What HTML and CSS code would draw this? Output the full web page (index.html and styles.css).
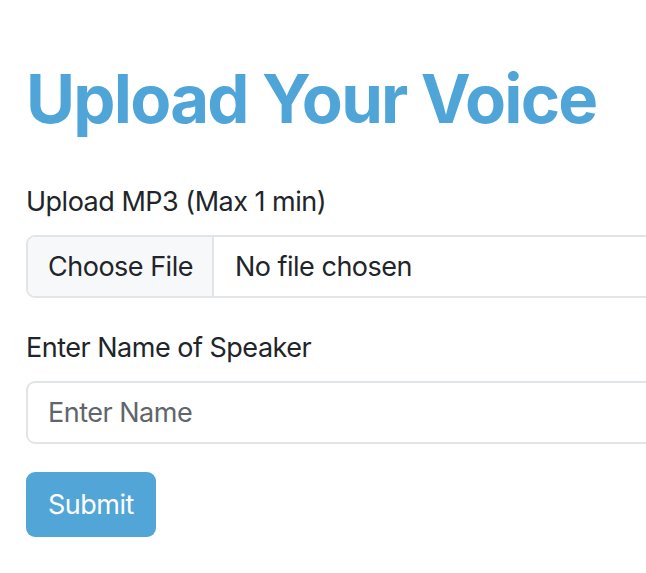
FILE: index.html
```html
<!DOCTYPE html>
<html lang="en">
<head>
<meta charset="utf-8">
<title>Upload Your Voice</title>
<link rel="stylesheet" href="styles.css">
</head>
<body>
<div class="page">
  <main class="container">
    <h1 class="title">Upload Your Voice</h1>
    <form class="form">
      <div class="field">
        <label class="label">Upload MP3 (Max 1 min)</label>
        <div class="file-control">
          <span class="file-btn">Choose File</span>
          <span class="file-name">No file chosen</span>
        </div>
      </div>
      <div class="field">
        <label class="label" for="speaker">Enter Name of Speaker</label>
        <input class="text-control" id="speaker" type="text" placeholder="Enter Name">
      </div>
      <button class="btn-submit" type="button">Submit</button>
    </form>
  </main>
</div>
</body>
</html>
```

FILE: styles.css
```css
html, body {
  margin: 0;
  padding: 0;
  background: #ffffff;
  overflow: hidden;
}

.page {
  width: 100%;
  overflow: hidden;
}

.container {
  width: 700px;
  padding: 59px 0 0 26px;
  font-family: Inter, "Noto Sans", sans-serif;
  font-size: 27px;
  line-height: 40px;
  letter-spacing: -0.5px;
  color: #212529;
}

.title {
  margin: 0 0 43px 0;
  font-size: 67px;
  line-height: 80px;
  font-weight: 700;
  color: #4fa5d7;
  letter-spacing: -1.75px;
}

.form {
  display: flex;
  flex-direction: column;
  align-items: flex-start;
}

.field {
  width: 100%;
  margin-bottom: 30px;
}

.label {
  display: block;
  margin-bottom: 13px;
}

.file-control {
  display: flex;
  height: 63px;
  box-sizing: border-box;
  border: 2px solid #e2e5e8;
  border-radius: 9px;
  overflow: hidden;
  background: #ffffff;
}

.file-btn {
  display: flex;
  align-items: center;
  padding: 0 19px 0 20px;
  background: #f7f8f9;
  border-right: 2px solid #e2e5e8;
}

.file-name {
  display: flex;
  align-items: center;
  padding-left: 21px;
}

.text-control {
  display: block;
  width: 100%;
  height: 63px;
  box-sizing: border-box;
  margin: 0;
  padding: 0 20px;
  border: 2px solid #e2e5e8;
  border-radius: 9px;
  font: inherit;
  letter-spacing: inherit;
  color: #212529;
  background: #ffffff;
  outline: none;
}

.text-control::placeholder {
  color: #5f656a;
  opacity: 1;
}

.btn-submit {
  margin: -2px 0 0 0;
  height: 65px;
  padding: 0 22px 0 22px;
  border: none;
  border-radius: 9px;
  background: #52a6d7;
  color: #ffffff;
  font: inherit;
  letter-spacing: inherit;
  cursor: pointer;
}
```
